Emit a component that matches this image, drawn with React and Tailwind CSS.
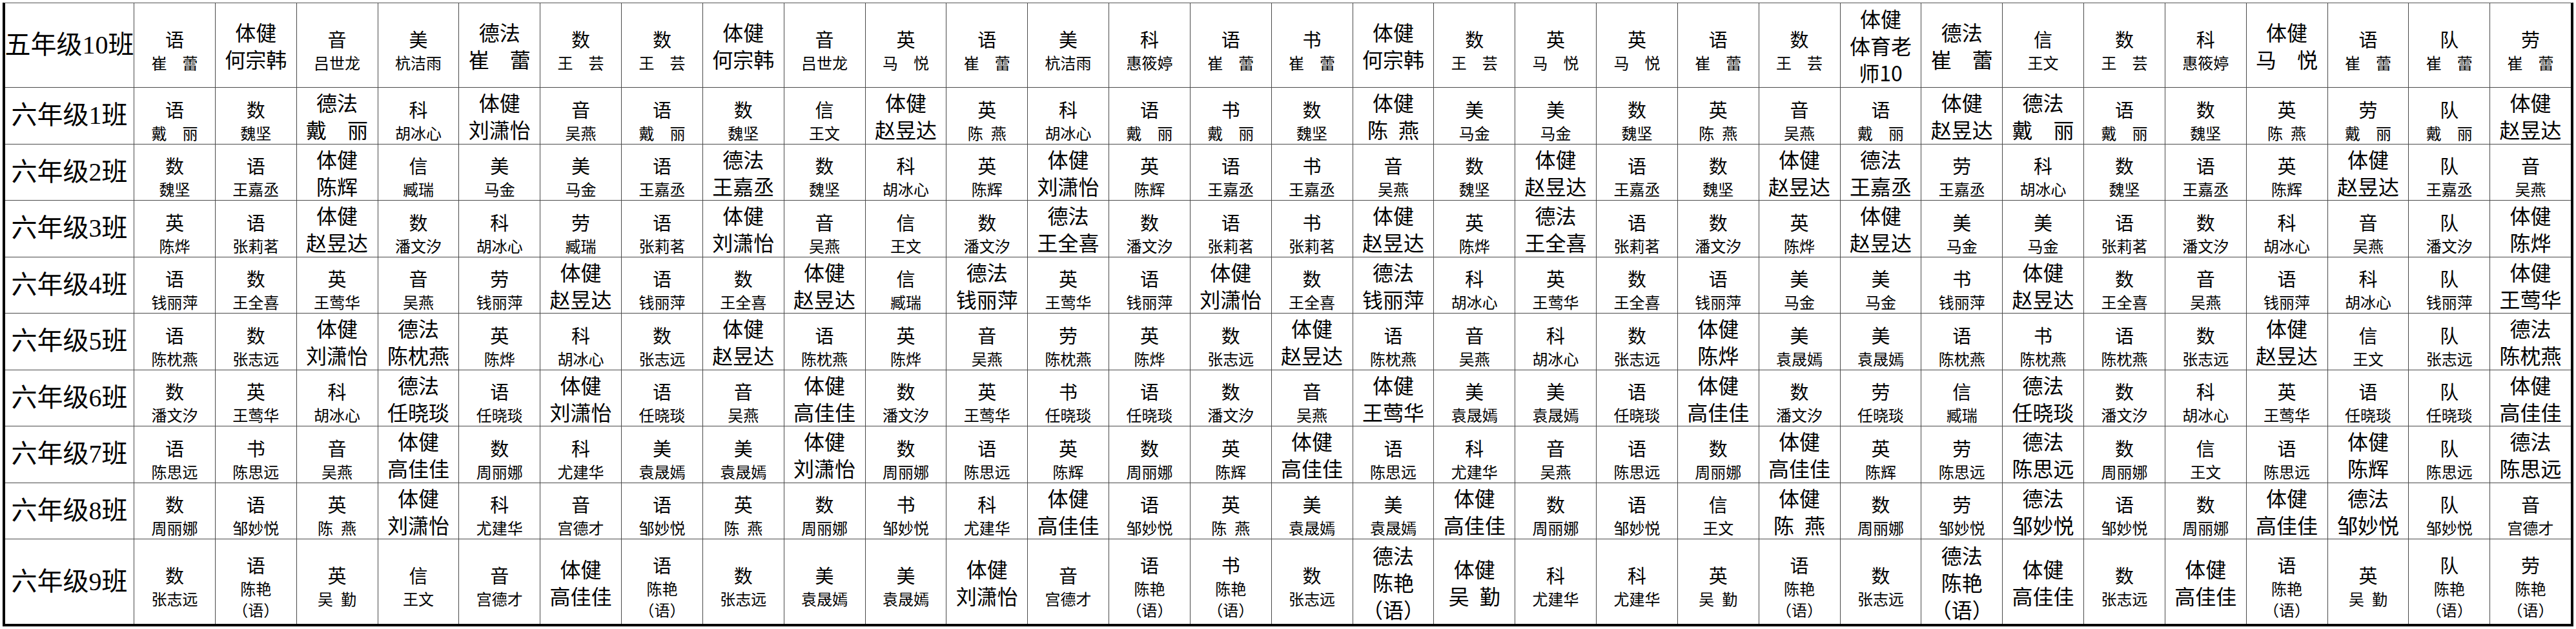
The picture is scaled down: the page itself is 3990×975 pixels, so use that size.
import React from "react";

const Q = "\u3000"; // full-width space
const E = "\u2002"; // en space
const YU = "陈艳/（语）";

const rows = [
  {
    label: "五年级10班",
    cells: [
      `语/崔${Q}蕾`, "体健/何宗韩", "音/吕世龙", "美/杭洁雨", `德法/崔${Q}蕾`, `数/王${Q}芸`, `数/王${Q}芸`, "体健/何宗韩", "音/吕世龙", `英/马${Q}悦`,
      `语/崔${Q}蕾`, "美/杭洁雨", "科/惠筱婷", `语/崔${Q}蕾`, `书/崔${Q}蕾`, "体健/何宗韩", `数/王${Q}芸`, `英/马${Q}悦`, `英/马${Q}悦`, `语/崔${Q}蕾`,
      `数/王${Q}芸`, "体健/体育老师10", `德法/崔${Q}蕾`, "信/王文", `数/王${Q}芸`, "科/惠筱婷", `体健/马${Q}悦`, `语/崔${Q}蕾`, `队/崔${Q}蕾`, `劳/崔${Q}蕾`,
    ],
  },
  {
    label: "六年级1班",
    cells: [
      `语/戴${Q}丽`, "数/魏坚", `德法/戴${Q}丽`, "科/胡冰心", "体健/刘潇怡", "音/吴燕", `语/戴${Q}丽`, "数/魏坚", "信/王文", "体健/赵昱达",
      `英/陈${E}燕`, "科/胡冰心", `语/戴${Q}丽`, `书/戴${Q}丽`, "数/魏坚", `体健/陈${E}燕`, "美/马金", "美/马金", "数/魏坚", `英/陈${E}燕`,
      "音/吴燕", `语/戴${Q}丽`, "体健/赵昱达", `德法/戴${Q}丽`, `语/戴${Q}丽`, "数/魏坚", `英/陈${E}燕`, `劳/戴${Q}丽`, `队/戴${Q}丽`, "体健/赵昱达",
    ],
  },
  {
    label: "六年级2班",
    cells: [
      "数/魏坚", "语/王嘉丞", "体健/陈辉", "信/臧瑞", "美/马金", "美/马金", "语/王嘉丞", "德法/王嘉丞", "数/魏坚", "科/胡冰心",
      "英/陈辉", "体健/刘潇怡", "英/陈辉", "语/王嘉丞", "书/王嘉丞", "音/吴燕", "数/魏坚", "体健/赵昱达", "语/王嘉丞", "数/魏坚",
      "体健/赵昱达", "德法/王嘉丞", "劳/王嘉丞", "科/胡冰心", "数/魏坚", "语/王嘉丞", "英/陈辉", "体健/赵昱达", "队/王嘉丞", "音/吴燕",
    ],
  },
  {
    label: "六年级3班",
    cells: [
      "英/陈烨", "语/张莉茗", "体健/赵昱达", "数/潘文汐", "科/胡冰心", "劳/臧瑞", "语/张莉茗", "体健/刘潇怡", "音/吴燕", "信/王文",
      "数/潘文汐", "德法/王全喜", "数/潘文汐", "语/张莉茗", "书/张莉茗", "体健/赵昱达", "英/陈烨", "德法/王全喜", "语/张莉茗", "数/潘文汐",
      "英/陈烨", "体健/赵昱达", "美/马金", "美/马金", "语/张莉茗", "数/潘文汐", "科/胡冰心", "音/吴燕", "队/潘文汐", "体健/陈烨",
    ],
  },
  {
    label: "六年级4班",
    cells: [
      "语/钱丽萍", "数/王全喜", "英/王莺华", "音/吴燕", "劳/钱丽萍", "体健/赵昱达", "语/钱丽萍", "数/王全喜", "体健/赵昱达", "信/臧瑞",
      "德法/钱丽萍", "英/王莺华", "语/钱丽萍", "体健/刘潇怡", "数/王全喜", "德法/钱丽萍", "科/胡冰心", "英/王莺华", "数/王全喜", "语/钱丽萍",
      "美/马金", "美/马金", "书/钱丽萍", "体健/赵昱达", "数/王全喜", "音/吴燕", "语/钱丽萍", "科/胡冰心", "队/钱丽萍", "体健/王莺华",
    ],
  },
  {
    label: "六年级5班",
    cells: [
      "语/陈枕燕", "数/张志远", "体健/刘潇怡", "德法/陈枕燕", "英/陈烨", "科/胡冰心", "数/张志远", "体健/赵昱达", "语/陈枕燕", "英/陈烨",
      "音/吴燕", "劳/陈枕燕", "英/陈烨", "数/张志远", "体健/赵昱达", "语/陈枕燕", "音/吴燕", "科/胡冰心", "数/张志远", "体健/陈烨",
      "美/袁晟嫣", "美/袁晟嫣", "语/陈枕燕", "书/陈枕燕", "语/陈枕燕", "数/张志远", "体健/赵昱达", "信/王文", "队/张志远", "德法/陈枕燕",
    ],
  },
  {
    label: "六年级6班",
    cells: [
      "数/潘文汐", "英/王莺华", "科/胡冰心", "德法/任晓琰", "语/任晓琰", "体健/刘潇怡", "语/任晓琰", "音/吴燕", "体健/高佳佳", "数/潘文汐",
      "英/王莺华", "书/任晓琰", "语/任晓琰", "数/潘文汐", "音/吴燕", "体健/王莺华", "美/袁晟嫣", "美/袁晟嫣", "语/任晓琰", "体健/高佳佳",
      "数/潘文汐", "劳/任晓琰", "信/臧瑞", "德法/任晓琰", "数/潘文汐", "科/胡冰心", "英/王莺华", "语/任晓琰", "队/任晓琰", "体健/高佳佳",
    ],
  },
  {
    label: "六年级7班",
    cells: [
      "语/陈思远", "书/陈思远", "音/吴燕", "体健/高佳佳", "数/周丽娜", "科/尤建华", "美/袁晟嫣", "美/袁晟嫣", "体健/刘潇怡", "数/周丽娜",
      "语/陈思远", "英/陈辉", "数/周丽娜", "英/陈辉", "体健/高佳佳", "语/陈思远", "科/尤建华", "音/吴燕", "语/陈思远", "数/周丽娜",
      "体健/高佳佳", "英/陈辉", "劳/陈思远", "德法/陈思远", "数/周丽娜", "信/王文", "语/陈思远", "体健/陈辉", "队/陈思远", "德法/陈思远",
    ],
  },
  {
    label: "六年级8班",
    cells: [
      "数/周丽娜", "语/邹妙悦", `英/陈${E}燕`, "体健/刘潇怡", "科/尤建华", "音/宫德才", "语/邹妙悦", `英/陈${E}燕`, "数/周丽娜", "书/邹妙悦",
      "科/尤建华", "体健/高佳佳", "语/邹妙悦", `英/陈${E}燕`, "美/袁晟嫣", "美/袁晟嫣", "体健/高佳佳", "数/周丽娜", "语/邹妙悦", "信/王文",
      `体健/陈${E}燕`, "数/周丽娜", "劳/邹妙悦", "德法/邹妙悦", "语/邹妙悦", "数/周丽娜", "体健/高佳佳", "德法/邹妙悦", "队/邹妙悦", "音/宫德才",
    ],
  },
  {
    label: "六年级9班",
    cells: [
      "数/张志远", `语/${YU}`, `英/吴${E}勤`, "信/王文", "音/宫德才", "体健/高佳佳", `语/${YU}`, "数/张志远", "美/袁晟嫣", "美/袁晟嫣",
      "体健/刘潇怡", "音/宫德才", `语/${YU}`, `书/${YU}`, "数/张志远", `德法/${YU}`, `体健/吴${E}勤`, "科/尤建华", "科/尤建华", `英/吴${E}勤`,
      `语/${YU}`, "数/张志远", `德法/${YU}`, "体健/高佳佳", "数/张志远", "体健/高佳佳", `语/${YU}`, `英/吴${E}勤`, `队/${YU}`, `劳/${YU}`,
    ],
  },
];

function Cell({ text }) {
  const lines = text.split("/");
  const big = lines[0] === "体健" || lines[0] === "德法";
  if (big) {
    return (
      <div className="bg-white flex flex-col items-center justify-center px-1.5 text-center text-[32px] leading-[42px] text-black">
        {lines.map((l, i) => (
          <div key={i} className="whitespace-pre-wrap">{l}</div>
        ))}
      </div>
    );
  }
  return (
    <div className="bg-white flex flex-col items-center justify-center pt-[12px] text-center text-black">
      <div className="text-[29px] leading-[40px]">{lines[0]}</div>
      {lines.slice(1).map((l, i) => (
        <div key={i} className="text-[24px] leading-[33px] whitespace-pre">{l}</div>
      ))}
    </div>
  );
}

export default function App() {
  return (
    <div className="w-[3990px] h-[975px] bg-white pt-[4px] pl-[4px] font-['Noto_Sans_CJK_SC',sans-serif]">
      <div className="w-[3982px] grid grid-cols-[199px_repeat(30,minmax(0,1fr))] grid-rows-[130px_repeat(8,86.5px)_131px] gap-px bg-[#4a4a4a] border-l-4 border-r-4 border-b-4 border-black border-t border-t-[#555555]">
        {rows.map((row) => (
          <React.Fragment key={row.label}>
            <div className="bg-white flex items-center justify-center whitespace-nowrap text-[40px] leading-none text-black font-['Liberation_Serif','Noto_Sans_CJK_SC',serif]">
              {row.label}
            </div>
            {row.cells.map((c, i) => (
              <Cell key={i} text={c} />
            ))}
          </React.Fragment>
        ))}
      </div>
    </div>
  );
}
